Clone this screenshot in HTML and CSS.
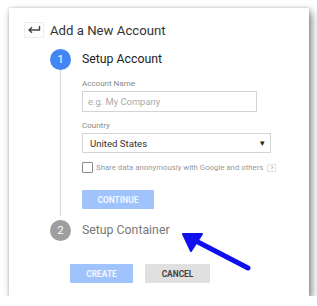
FILE: index.html
```html
<!DOCTYPE html>
<html lang="en">
<head>
    <meta charset="UTF-8">
    <title>Add a New Account</title>
    <link rel="stylesheet" href="styles.css">
</head>
<body>
    <div class="card">
        <div class="header">
            <div class="back-btn">
                <svg width="14" height="10" viewBox="0 0 14 10">
                    <path d="M12.5 1 V5 H2.5 M5 2.2 L2 5 L5 7.8" fill="none" stroke="#444" stroke-width="1.4"/>
                </svg>
            </div>
            <h1 class="title">Add a New Account</h1>
        </div>

        <div class="step active">
            <div class="step-rail">
                <div class="step-num">1</div>
                <div class="step-line"></div>
            </div>
            <div class="step-body">
                <div class="step-title">Setup Account</div>
                <label class="field-label">Account Name</label>
                <div class="text-input">e.g. My Company</div>
                <label class="field-label">Country</label>
                <div class="select-input">
                    <span>United States</span>
                    <span class="caret">&#9662;</span>
                </div>
                <div class="check-row">
                    <span class="checkbox"></span>
                    <span class="check-text">Share data anonymously with Google and others</span>
                    <span class="help">?</span>
                </div>
                <button class="btn btn-primary">CONTINUE</button>
            </div>
        </div>

        <div class="step">
            <div class="step-rail">
                <div class="step-num">2</div>
            </div>
            <div class="step-body">
                <div class="step-title">Setup Container</div>
            </div>
        </div>

        <div class="actions">
            <button class="btn btn-primary btn-wide">CREATE</button>
            <button class="btn btn-grey btn-wide">CANCEL</button>
        </div>

        <svg class="pointer" width="80" height="44" viewBox="0 0 80 44">
            <path d="M68 37 L14 9" stroke="#1010ee" stroke-width="5" stroke-linecap="round" fill="none"/>
            <path d="M3 3 L22 3 L11 20 Z" fill="#1010ee" stroke="#1010ee" stroke-width="2" stroke-linejoin="round"/>
        </svg>
    </div>
</body>
</html>
```

FILE: styles.css
```css
* {
    box-sizing: border-box;
    margin: 0;
    padding: 0;
}

html, body {
    background: #ffffff;
    font-family: Roboto, 'Liberation Sans', sans-serif;
    color: #333;
}

body {
    padding: 8px 0 0 9px;
}

.card {
    position: relative;
    width: 300px;
    height: 288px;
    background: #ffffff;
    box-shadow: 3px 4px 8px rgba(0, 0, 0, 0.45), 0 0 3px rgba(0, 0, 0, 0.2);
    padding: 14px 0 0 15px;
}

.header {
    display: flex;
    align-items: center;
    gap: 6px;
    height: 16px;
}

.back-btn {
    width: 20px;
    height: 16px;
    border: 1px solid #ececec;
    display: flex;
    align-items: center;
    justify-content: center;
}

.title {
    font-size: 13.2px;
    font-weight: 400;
    color: #333;
}

.step {
    display: flex;
    margin-left: 26px;
}

.step.active {
    margin-top: 11px;
}

.step-rail {
    width: 21px;
    display: flex;
    flex-direction: column;
    align-items: center;
}

.step-num {
    width: 21px;
    height: 21px;
    border-radius: 50%;
    background: #9e9e9e;
    color: #fff;
    font-size: 11px;
    display: flex;
    align-items: center;
    justify-content: center;
}

.active .step-num {
    background: #4285f4;
}

.step-line {
    flex: 1;
    width: 1px;
    background: #d6d6d6;
    margin-bottom: 4px;
}

.step-body {
    margin-left: 11px;
    display: flex;
    flex-direction: column;
    align-items: flex-start;
}

.step-title {
    height: 21px;
    line-height: 21px;
    font-size: 12.3px;
    color: #777;
}

.active .step-title {
    color: #222;
}

.field-label {
    font-size: 8px;
    color: #888;
    margin-top: 8px;
    line-height: 12px;
}

.text-input {
    width: 175px;
    height: 21px;
    margin-top: 1px;
    border: 1px solid #d4d4d4;
    padding-left: 5px;
    font-size: 9.4px;
    color: #aaa;
    line-height: 19px;
}

.select-input {
    width: 189px;
    height: 20px;
    margin-top: 1px;
    border: 1px solid #d4d4d4;
    padding: 0 5px 0 7px;
    font-size: 9.6px;
    color: #333;
    display: flex;
    align-items: center;
    justify-content: space-between;
}

.caret {
    font-size: 9px;
    color: #222;
}

.check-row {
    display: flex;
    align-items: center;
    margin-top: 9px;
    height: 11px;
}

.checkbox {
    width: 11px;
    height: 11px;
    border: 1px solid #888;
    border-radius: 1px;
}

.check-text {
    margin-left: 3px;
    font-size: 7.8px;
    color: #999;
}

.help {
    margin-left: 4px;
    width: 9px;
    height: 8px;
    border: 1px solid #e2e2e2;
    font-size: 6px;
    color: #999;
    display: flex;
    align-items: center;
    justify-content: center;
}

.btn {
    border: none;
    font-family: Roboto, 'Liberation Sans', sans-serif;
    font-size: 8.4px;
    font-weight: 700;
    height: 19px;
    border-radius: 1px;
}

.btn-primary {
    background: #a0c3fb;
    color: #f2f7ff;
    width: 72px;
    margin-top: 17px;
    margin-bottom: 11px;
}

.btn-grey {
    background: #e0e0e0;
    color: #444;
}

.actions {
    display: flex;
    gap: 12px;
    margin: 23px 0 0 46px;
}

.actions .btn {
    margin: 0;
    height: 19px;
}

.actions .btn-primary {
    width: 63px;
}

.actions .btn-grey {
    width: 65px;
}

.pointer {
    position: absolute;
    left: 171px;
    top: 223px;
}
```
